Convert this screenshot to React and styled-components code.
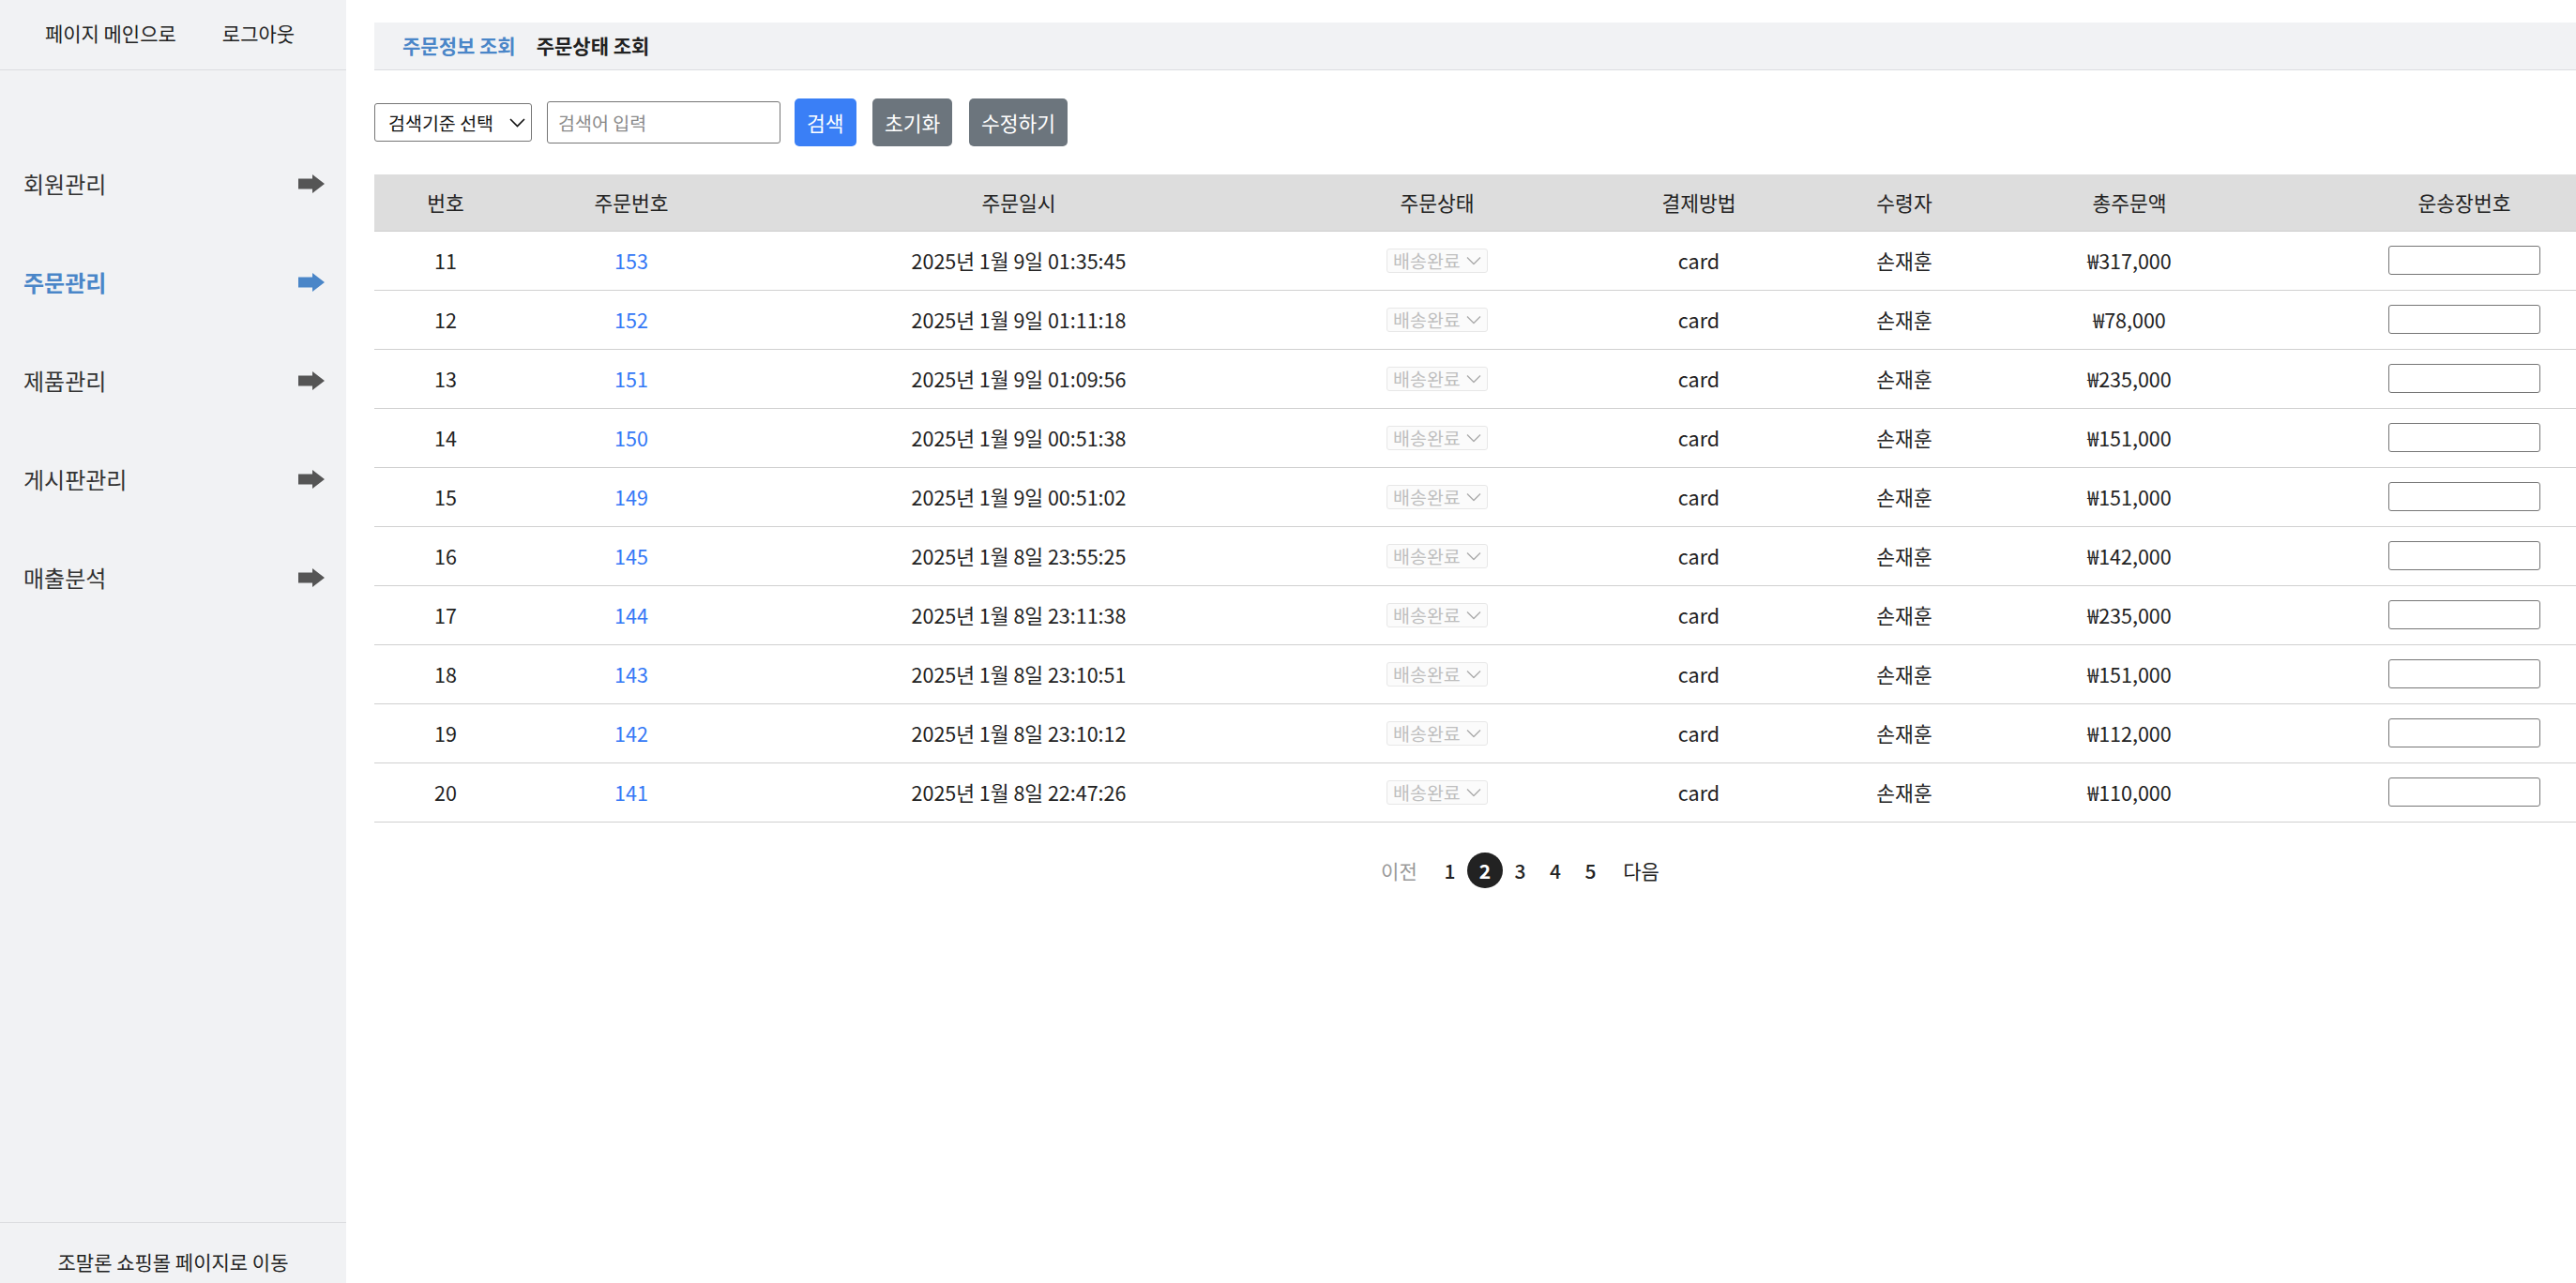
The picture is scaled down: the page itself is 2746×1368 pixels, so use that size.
import React from 'react';
import styled, { createGlobalStyle } from 'styled-components';

const GlobalStyle = createGlobalStyle`
	html, body {
		margin: 0;
		padding: 0;
		height: 100%;
		overflow: hidden;
		background: #fff;
	}
	body {
		font-family: "Noto Sans CJK KR", "Noto Sans", sans-serif;
		color: #222;
	}
	* {
		box-sizing: border-box;
	}
`;

const Layout = styled.div`
	display: flex;
	height: 100vh;
	width: 100vw;
	overflow: hidden;
`;

const Sidebar = styled.aside`
	flex: 0 0 369px;
	display: flex;
	flex-direction: column;
	background: #f1f2f4;
`;

const SideTop = styled.div`
	height: 75px;
	display: flex;
	align-items: center;
	justify-content: center;
	gap: 49px;
	border-bottom: 1px solid #dcdde0;
	padding: 0 7px 4px 0;
`;

const TopLink = styled.a`
	font-size: 21px;
	color: #222;
	text-decoration: none;
	cursor: pointer;
`;

const Menu = styled.ul`
	list-style: none;
	margin: 0;
	padding: 68px 0 0;
	flex: 1;
`;

const MenuItem = styled.li`
	height: 105px;
	display: flex;
	align-items: center;
	justify-content: space-between;
	padding: 0 23px 0 25px;
	font-size: 24px;
	font-weight: ${ ( p ) => ( p.active ? 700 : 400 ) };
	color: ${ ( p ) => ( p.active ? '#4a86c8' : '#333' ) };
`;

const SideFooter = styled.div`
	height: 65px;
	border-top: 1px solid #dcdde0;
	display: flex;
	align-items: flex-end;
	justify-content: center;
	padding-bottom: 8px;
	font-size: 21px;
	color: #222;
`;

const Main = styled.main`
	flex: 1;
	min-width: 0;
	padding: 24px 0 0 30px;
	overflow: hidden;
`;

const TabBar = styled.div`
	height: 51px;
	display: flex;
	align-items: center;
	gap: 22px;
	padding: 0 0 2px 30px;
	background: #f1f2f4;
	border-bottom: 1px solid #dcdde0;
`;

const Tab = styled.span`
	font-size: 21px;
	font-weight: 700;
	color: ${ ( p ) => ( p.active ? '#4a86c8' : '#222' ) };
	cursor: pointer;
`;

const Toolbar = styled.div`
	display: flex;
	align-items: center;
	height: 51px;
	margin-top: 30px;
`;

const SelectWrap = styled.div`
	position: relative;
	width: 168px;
	height: 41px;
	margin-right: 16px;
`;

const SearchSelect = styled.select`
	appearance: none;
	width: 100%;
	height: 100%;
	padding: 0 30px 0 14px;
	font-family: inherit;
	font-size: 19.5px;
	color: #111;
	background: #fff;
	border: 1px solid #767676;
	border-radius: 3px;
`;

const Chevron = styled.svg`
	position: absolute;
	top: 50%;
	right: ${ ( p ) => p.right }px;
	transform: translateY(-50%);
	pointer-events: none;
`;

const SearchInput = styled.input`
	width: 249px;
	height: 45px;
	padding: 0 11px;
	font-family: inherit;
	font-size: 19.5px;
	border: 1px solid #767676;
	border-radius: 3px;
	margin-right: 15px;
	&::placeholder {
		color: #8a8a8a;
	}
`;

const Button = styled.button`
	height: 51px;
	padding: 0 13px;
	margin-right: 17.5px;
	font-family: inherit;
	font-size: 21.5px;
	color: #fff;
	border: none;
	border-radius: 5px;
	background: ${ ( p ) => ( p.primary ? '#3a7ff6' : '#6c757d' ) };
	cursor: pointer;
`;

const TableArea = styled.div`
	width: 2440px;
	margin-top: 30px;
`;

const Table = styled.table`
	width: 2440px;
	table-layout: fixed;
	border-collapse: collapse;
	text-align: center;
`;

const Th = styled.th`
	height: 60px;
	background: #dddddd;
	font-size: 21.5px;
	font-weight: 400;
	color: #222;
	border-bottom: 1px solid #cfcfcf;
`;

const Tr = styled.tr`
	height: 63px;
	border-bottom: 1px solid #d0d0d0;
`;

const Td = styled.td`
	font-size: 21.5px;
	font-weight: 400;
	color: ${ ( p ) => ( p.link ? '#3478f6' : '#222' ) };
	padding: 0;
	vertical-align: middle;
`;

const StatusWrap = styled.div`
	position: relative;
	width: 108px;
	height: 26px;
	margin: 0 auto;
`;

const StatusSelect = styled.select`
	appearance: none;
	display: block;
	width: 100%;
	height: 100%;
	padding: 0 0 0 6px;
	font-family: inherit;
	font-size: 19.5px;
	line-height: 24px;
	color: #a4a4a4;
	background: #fafafa;
	border: 1px solid #dedede;
	border-radius: 3px;
`;

const TrackInput = styled.input`
	display: block;
	width: 162px;
	height: 31px;
	margin: 0 auto;
	border: 1px solid #767676;
	border-radius: 3px;
`;

const Pagination = styled.nav`
	display: flex;
	justify-content: center;
	align-items: center;
	margin-top: 32px;
	padding-left: 3px;
	font-size: 21px;
	font-weight: 500;
`;

const PageNav = styled.span`
	padding: 0 8px;
	margin: ${ ( p ) => ( p.prev ? '0 8px 0 0' : '0 0 0 8px' ) };
	font-weight: 400;
	color: ${ ( p ) => ( p.disabled ? '#999' : '#222' ) };
	cursor: pointer;
`;

const PageNum = styled.span`
	width: 37.5px;
	height: 38px;
	display: flex;
	align-items: center;
	justify-content: center;
	border-radius: 50%;
	font-weight: ${ ( p ) => ( p.active ? 700 : 500 ) };
	color: ${ ( p ) => ( p.active ? '#fff' : '#222' ) };
	background: ${ ( p ) => ( p.active ? '#222' : 'transparent' ) };
	cursor: pointer;
`;

const ArrowIcon = ( { color } ) => (
	<svg width="28" height="20" viewBox="0 0 28 20">
		<path d="M0 4.5H15V0L28 10L15 20V15.5H0Z" fill={ color } />
	</svg>
);

const menus = [ '회원관리', '주문관리', '제품관리', '게시판관리', '매출분석' ];

const orders = [
	[ 11, 153, '2025년 1월 9일 01:35:45', '₩317,000' ],
	[ 12, 152, '2025년 1월 9일 01:11:18', '₩78,000' ],
	[ 13, 151, '2025년 1월 9일 01:09:56', '₩235,000' ],
	[ 14, 150, '2025년 1월 9일 00:51:38', '₩151,000' ],
	[ 15, 149, '2025년 1월 9일 00:51:02', '₩151,000' ],
	[ 16, 145, '2025년 1월 8일 23:55:25', '₩142,000' ],
	[ 17, 144, '2025년 1월 8일 23:11:38', '₩235,000' ],
	[ 18, 143, '2025년 1월 8일 23:10:51', '₩151,000' ],
	[ 19, 142, '2025년 1월 8일 23:10:12', '₩112,000' ],
	[ 20, 141, '2025년 1월 8일 22:47:26', '₩110,000' ],
];

const columns = [
	[ '번호', 152 ],
	[ '주문번호', 244 ],
	[ '주문일시', 582 ],
	[ '주문상태', 310 ],
	[ '결제방법', 248 ],
	[ '수령자', 190 ],
	[ '총주문액', 290 ],
	[ '운송장번호', 424 ],
];

export default function App() {
	return (
		<>
			<GlobalStyle />
			<Layout>
				<Sidebar>
					<SideTop>
						<TopLink>페이지 메인으로</TopLink>
						<TopLink>로그아웃</TopLink>
					</SideTop>
					<Menu>
						{ menus.map( ( name ) => {
							const active = name === '주문관리';
							return (
								<MenuItem key={ name } active={ active }>
									{ name }
									<ArrowIcon color={ active ? '#4a86c8' : '#555' } />
								</MenuItem>
							);
						} ) }
					</Menu>
					<SideFooter>조말론 쇼핑몰 페이지로 이동</SideFooter>
				</Sidebar>

				<Main>
					<TabBar>
						<Tab active>주문정보 조회</Tab>
						<Tab>주문상태 조회</Tab>
					</TabBar>

					<Toolbar>
						<SelectWrap>
							<SearchSelect defaultValue="">
								<option value="">검색기준 선택</option>
								<option value="orderNo">주문번호</option>
								<option value="name">수령자</option>
							</SearchSelect>
							<Chevron right={ 7 } width="17" height="10" viewBox="0 0 17 10">
								<path d="M1 1L8.5 8.5L16 1" fill="none" stroke="#111" strokeWidth="1.6" />
							</Chevron>
						</SelectWrap>
						<SearchInput placeholder="검색어 입력" />
						<Button primary>검색</Button>
						<Button>초기화</Button>
						<Button>수정하기</Button>
					</Toolbar>

					<TableArea>
						<Table>
							<colgroup>
								{ columns.map( ( [ label, width ] ) => (
									<col key={ label } style={ { width } } />
								) ) }
							</colgroup>
							<thead>
								<tr>
									{ columns.map( ( [ label ] ) => (
										<Th key={ label }>{ label }</Th>
									) ) }
								</tr>
							</thead>
							<tbody>
								{ orders.map( ( [ no, orderNo, date, total ] ) => (
									<Tr key={ no }>
										<Td>{ no }</Td>
										<Td link>{ orderNo }</Td>
										<Td>{ date }</Td>
										<Td>
											<StatusWrap>
												<StatusSelect disabled defaultValue="done">
													<option value="done">배송완료</option>
												</StatusSelect>
												<Chevron right={ 7 } width="16" height="9" viewBox="0 0 16 9">
													<path d="M1 1L8 8L15 1" fill="none" stroke="#aaa" strokeWidth="1.3" />
												</Chevron>
											</StatusWrap>
										</Td>
										<Td>card</Td>
										<Td>손재훈</Td>
										<Td>{ total }</Td>
										<Td>
											<TrackInput />
										</Td>
									</Tr>
								) ) }
							</tbody>
						</Table>

						<Pagination>
							<PageNav prev disabled>이전</PageNav>
							{ [ 1, 2, 3, 4, 5 ].map( ( n ) => (
								<PageNum key={ n } active={ n === 2 }>{ n }</PageNum>
							) ) }
							<PageNav>다음</PageNav>
						</Pagination>
					</TableArea>
				</Main>
			</Layout>
		</>
	);
}
